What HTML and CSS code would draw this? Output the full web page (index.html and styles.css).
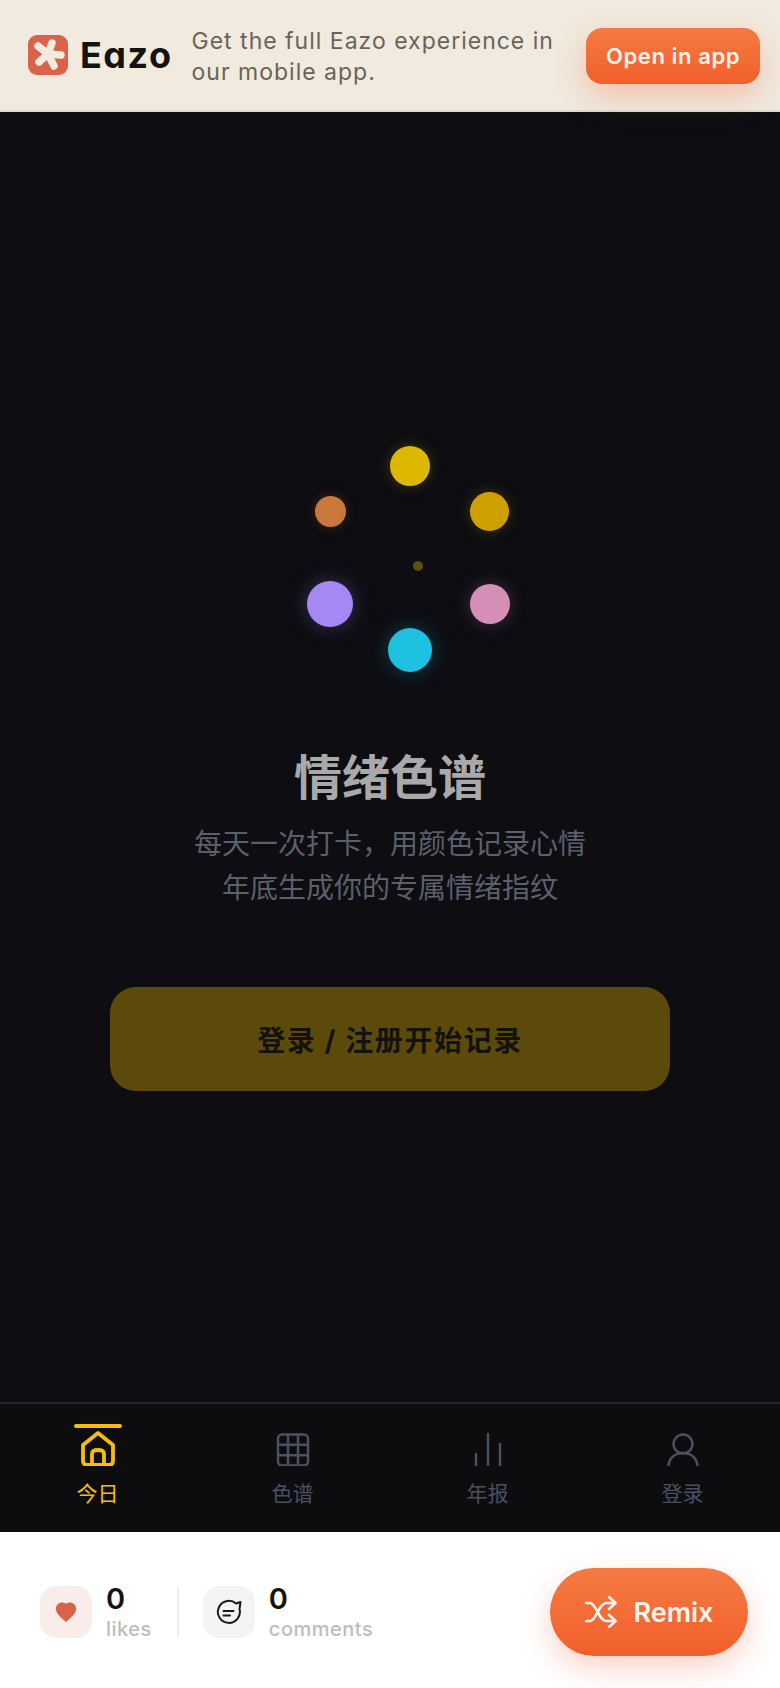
FILE: index.html
```html
<!DOCTYPE html>
<html lang="zh-CN">
<head>
    <meta charset="UTF-8">
    <meta name="viewport" content="width=device-width, initial-scale=1.0">
    <title>情绪色谱</title>
    <link rel="stylesheet" href="styles.css">
</head>
<body>
    <header class="banner">
        <div class="brand">
            <svg class="brand-mark" viewBox="0 0 40 40">
                <rect width="40" height="40" rx="9" fill="#d9634a"/>
                <g stroke="#f1eadf" stroke-width="7.500" stroke-linecap="round">
                    <path d="M20 19 L24 8"/>
                    <path d="M20 19 L33 20"/>
                    <path d="M20 19 L26 31"/>
                    <path d="M20 19 L11 27"/>
                    <path d="M20 19 L10 11"/>
                </g>
            </svg>
            <span class="brand-name">Eazo</span>
        </div>
        <p class="banner-text">Get the full Eazo experience in our mobile app.</p>
        <button class="open-btn">Open in app</button>
    </header>

    <main class="main">
        <div class="dots">
            <span class="dot dot-yellow"></span>
            <span class="dot dot-amber"></span>
            <span class="dot dot-orange"></span>
            <span class="dot dot-purple"></span>
            <span class="dot dot-pink"></span>
            <span class="dot dot-cyan"></span>
            <span class="dot dot-center"></span>
        </div>
        <h1 class="title">情绪色谱</h1>
        <p class="subtitle">每天一次打卡，用颜色记录心情<br>年底生成你的专属情绪指纹</p>
        <button class="login-btn">登录 / 注册开始记录</button>
    </main>

    <nav class="tabs">
        <a class="tab tab-active">
            <span class="tab-bar"></span>
            <svg class="tab-icon" viewBox="0 0 36 36" fill="none" stroke="currentColor" stroke-width="3.800" stroke-linejoin="round">
                <path d="M3 15 L18 3 L33 15 V31 Q33 35 29 35 H7 Q3 35 3 31 Z"/>
                <path d="M12 35 V24 Q12 20 18 20 Q24 20 24 24 V35"/>
            </svg>
            <span class="tab-label">今日</span>
        </a>
        <a class="tab">
            <svg class="tab-icon" viewBox="0 0 36 36" fill="none" stroke="currentColor" stroke-width="2.500">
                <rect x="3" y="4.500" width="30" height="31" rx="4"/>
                <path d="M3 14.800 H33 M3 25.200 H33 M13 4.500 V35.500 M23 4.500 V35.500"/>
            </svg>
            <span class="tab-label">色谱</span>
        </a>
        <a class="tab">
            <svg class="tab-icon" viewBox="0 0 36 36" fill="none" stroke="currentColor" stroke-width="2.400" stroke-linecap="round">
                <path d="M6 24 V35.500 M18 4 V35.500 M30 14 V35.500"/>
            </svg>
            <span class="tab-label">年报</span>
        </a>
        <a class="tab">
            <svg class="tab-icon" viewBox="0 0 36 36" fill="none" stroke="currentColor" stroke-width="2.400" stroke-linecap="round">
                <circle cx="18" cy="14" r="9.500"/>
                <path d="M3.500 36 C4 28 10 23 18 23 C26 23 32 28 32.500 36"/>
            </svg>
            <span class="tab-label">登录</span>
        </a>
    </nav>

    <footer class="action-bar">
        <div class="stat">
            <span class="stat-icon stat-icon-like">
                <svg viewBox="0 0 24 24" width="22" height="22"><path d="M12 23 C8 19 1 14.500 1 8.500 C1 3.500 5 1.500 8 1.500 C10 1.500 11.200 2.200 12 3 C12.800 2.200 14 1.500 16 1.500 C19 1.500 23 3.500 23 8.500 C23 14.500 16 19 12 23 Z" fill="#d9634a"/></svg>
            </span>
            <span class="stat-text">
                <span class="stat-num">0</span>
                <span class="stat-name">likes</span>
            </span>
        </div>
        <span class="stat-sep"></span>
        <div class="stat">
            <span class="stat-icon">
                <svg viewBox="0 0 26 26" width="26" height="26" fill="none" stroke="#1a1a1a" stroke-width="2" stroke-linecap="round">
                    <path d="M20 4.500 A11 11 0 1 0 23.500 10 L24.500 3 Z" stroke-linejoin="round"/>
                    <path d="M7.500 12 H17.500 M7.500 16.500 H14"/>
                </svg>
            </span>
            <span class="stat-text">
                <span class="stat-num">0</span>
                <span class="stat-name">comments</span>
            </span>
        </div>
        <button class="remix-btn">
            <svg viewBox="0 0 32 32" width="32" height="32" fill="none" stroke="#fff5ee" stroke-width="2.600" stroke-linecap="round" stroke-linejoin="round">
                <path d="M1 7 H5 C11 7 14 25 21 25 H30"/>
                <path d="M1 25 H5 C11 25 14 7 21 7 H30"/>
                <path d="M24 1 L30.500 7 L24 13"/>
                <path d="M24 19 L30.500 25 L24 31"/>
            </svg>
            Remix
        </button>
    </footer>
</body>
</html>
```

FILE: styles.css
```css
*{
    box-sizing:border-box;
}
html,body{
    margin:0;
    padding:0;
}
body{
    width:780px;
    height:1688px;
    display:flex;
    flex-direction:column;
    overflow:hidden;
    font-family:Inter,"Noto Sans CJK SC",sans-serif;
    background:#0d0d12;
}
button{
    border:none;
    font-family:inherit;
}

/* top banner */
.banner{
    height:112px;
    flex:none;
    display:flex;
    align-items:center;
    padding:0 20px 0 28px;
    background:#f1eadf;
    border-bottom:2px solid #dedad1;
    position:relative;
    z-index:2;
}
.brand{
    display:flex;
    align-items:center;
    gap:12px;
    flex:none;
}
.brand-mark{
    width:40px;
    height:40px;
}
.brand-name{
    font-size:36px;
    font-weight:700;
    font-feature-settings:"cv11";
    color:#14130f;
    letter-spacing:1.500px;
}
.banner-text{
    margin:4px 0 0 19px;
    width:378px;
    font-size:23px;
    line-height:31px;
    letter-spacing:1px;
    color:#69635a;
}
.open-btn{
    margin:2px 0 0 auto;
    width:174px;
    height:56px;
    border-radius:16px;
    font-size:22px;
    font-weight:600;
    letter-spacing:.6px;
    color:#fff6ee;
    background:linear-gradient(#f57a43,#f25f2b);
    box-shadow:0 12px 32px rgba(240,95,50,.3);
}

/* main area */
.main{
    flex:1;
    display:flex;
    flex-direction:column;
    align-items:center;
    padding-top:308px;
    background:#0d0d12;
}
.dots{
    width:240px;
    height:270px;
    margin-left:20px;
    position:relative;
    flex:none;
}
.dot{
    position:absolute;
    border-radius:50%;
}
.dot-yellow{
    left:110px;
    top:26px;
    width:40px;
    height:40px;
    background:#dcb900;
    box-shadow:0 0 14px rgba(220,185,0,.25);
}
.dot-amber{
    left:190px;
    top:72px;
    width:39px;
    height:39px;
    background:#cf9f00;
    box-shadow:0 0 14px rgba(207,159,0,.25);
}
.dot-orange{
    left:35px;
    top:76px;
    width:31px;
    height:31px;
    background:#c9773a;
    box-shadow:0 0 12px rgba(201,119,58,.25);
}
.dot-purple{
    left:27px;
    top:161px;
    width:46px;
    height:46px;
    background:#a688f5;
    box-shadow:0 0 20px rgba(166,136,245,.3);
}
.dot-pink{
    left:190px;
    top:164px;
    width:40px;
    height:40px;
    background:#d58eb5;
    box-shadow:0 0 18px rgba(213,142,181,.25);
}
.dot-cyan{
    left:108px;
    top:208px;
    width:44px;
    height:44px;
    background:#1fc1e0;
    box-shadow:0 0 20px rgba(31,193,224,.3);
}
.dot-center{
    left:133px;
    top:141px;
    width:10px;
    height:10px;
    background:#5e4e10;
}
.title{
    margin:54px 0 0;
    font-size:48px;
    line-height:68px;
    font-weight:700;
    color:#a9a9ac;
}
.subtitle{
    margin:10px 0 0;
    font-size:28px;
    line-height:44px;
    text-align:center;
    color:#5c606b;
}
.login-btn{
    margin-top:77px;
    width:560px;
    height:104px;
    border-radius:26px;
    font-size:28px;
    font-weight:700;
    letter-spacing:1.600px;
    color:#14120c;
    background:#5c4a0b;
}

/* bottom tabs */
.tabs{
    height:130px;
    flex:none;
    display:grid;
    grid-template-columns:repeat(4,1fr);
    background:#0d0d10;
    border-top:2px solid #24242a;
}
.tab{
    position:relative;
    display:flex;
    flex-direction:column;
    align-items:center;
    padding-top:26px;
    color:#4a5160;
}
.tab-active{
    color:#f5bd0a;
}
.tab-bar{
    position:absolute;
    left:50%;
    top:20px;
    width:48px;
    height:4px;
    margin-left:-24px;
    border-radius:2px;
    background:#f5bd0a;
}
.tab-icon{
    width:36px;
    height:36px;
}
.tab-label{
    margin-top:13px;
    font-size:21px;
    line-height:30px;
}

/* likes, comments, remix */
.action-bar{
    height:156px;
    flex:none;
    display:flex;
    align-items:center;
    padding:4px 32px 0 40px;
    background:#fff;
}
.stat{
    display:flex;
    align-items:center;
    gap:14px;
}
.stat-icon{
    width:52px;
    height:52px;
    border-radius:16px;
    display:flex;
    align-items:center;
    justify-content:center;
    background:#f4f4f4;
}
.stat-icon-like{
    background:#f9edea;
}
.stat-text{
    display:flex;
    flex-direction:column;
}
.stat-num{
    font-size:29px;
    line-height:34px;
    font-weight:600;
    color:#14130f;
}
.stat-name{
    font-size:20px;
    line-height:26px;
    font-weight:500;
    letter-spacing:.5px;
    color:#bdbdbd;
}
.stat-sep{
    width:2px;
    height:48px;
    margin:0 24px 0 25px;
    background:#ececec;
}
.remix-btn{
    margin-left:auto;
    width:198px;
    height:88px;
    border-radius:44px;
    display:flex;
    align-items:center;
    justify-content:center;
    gap:17px;
    font-size:27px;
    font-weight:600;
    color:#fff6ee;
    background:linear-gradient(#f57a43,#f25f2b);
    box-shadow:0 12px 30px rgba(240,95,50,.28);
}
```
